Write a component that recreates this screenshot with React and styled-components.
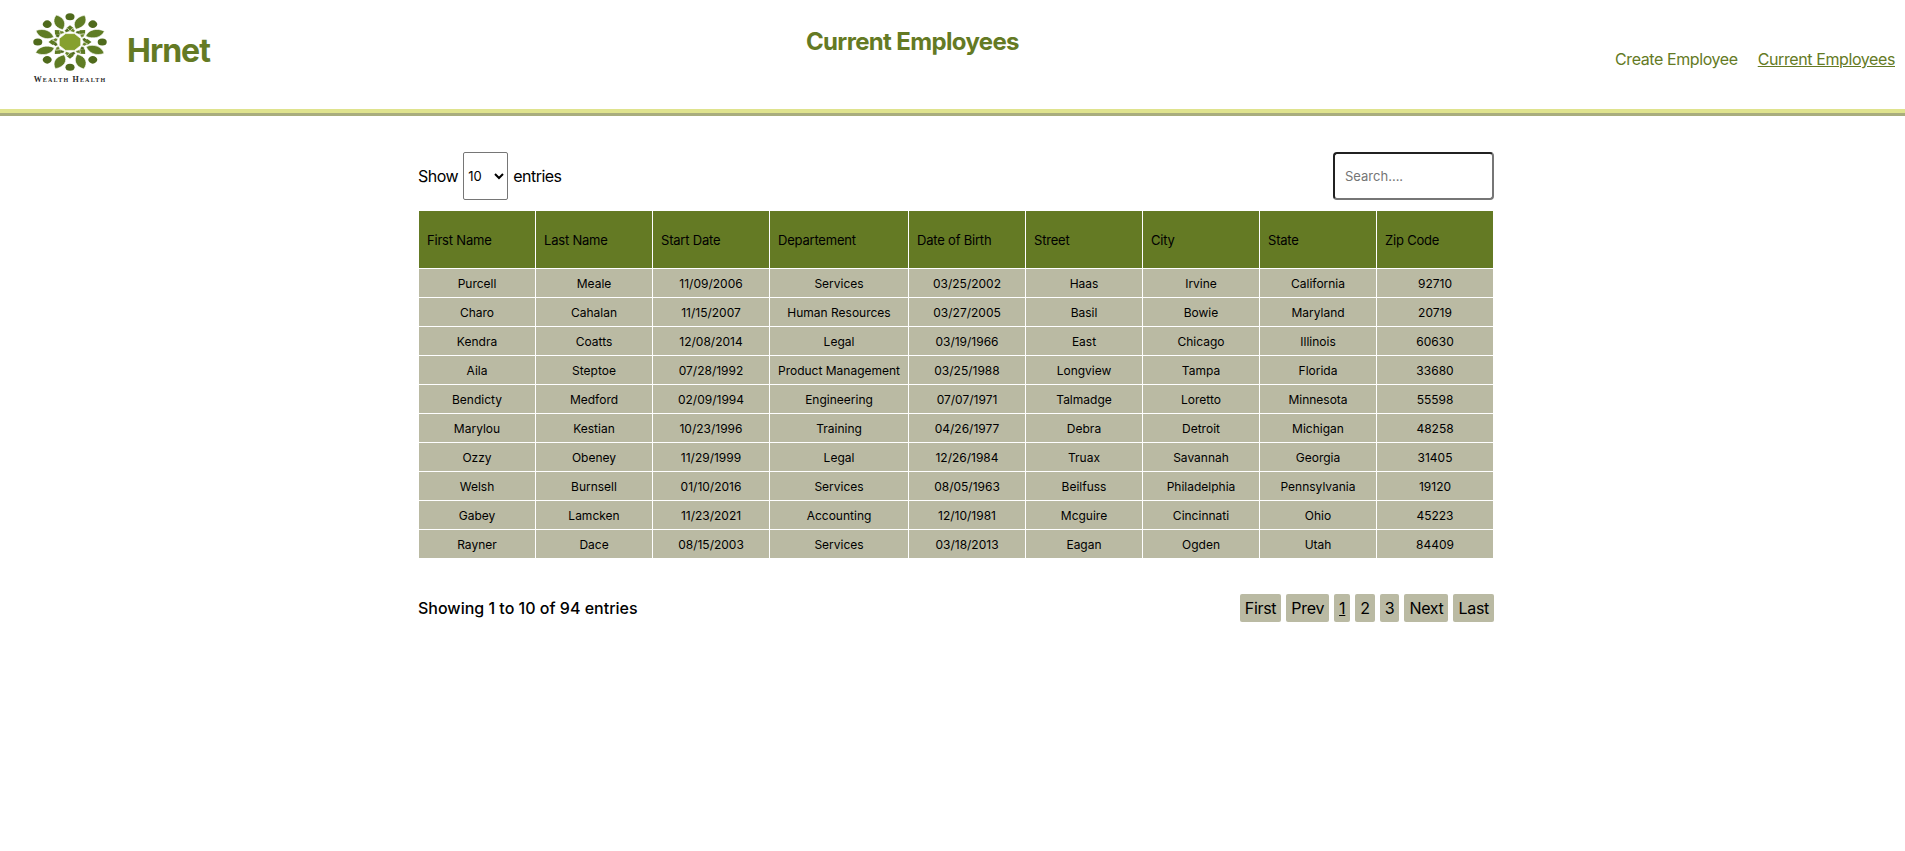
import styled, { createGlobalStyle } from 'styled-components'

const employees = [
	['Purcell', 'Meale', '11/09/2006', 'Services', '03/25/2002', 'Haas', 'Irvine', 'California', '92710'],
	['Charo', 'Cahalan', '11/15/2007', 'Human Resources', '03/27/2005', 'Basil', 'Bowie', 'Maryland', '20719'],
	['Kendra', 'Coatts', '12/08/2014', 'Legal', '03/19/1966', 'East', 'Chicago', 'Illinois', '60630'],
	['Aila', 'Steptoe', '07/28/1992', 'Product Management', '03/25/1988', 'Longview', 'Tampa', 'Florida', '33680'],
	['Bendicty', 'Medford', '02/09/1994', 'Engineering', '07/07/1971', 'Talmadge', 'Loretto', 'Minnesota', '55598'],
	['Marylou', 'Kestian', '10/23/1996', 'Training', '04/26/1977', 'Debra', 'Detroit', 'Michigan', '48258'],
	['Ozzy', 'Obeney', '11/29/1999', 'Legal', '12/26/1984', 'Truax', 'Savannah', 'Georgia', '31405'],
	['Welsh', 'Burnsell', '01/10/2016', 'Services', '08/05/1963', 'Beilfuss', 'Philadelphia', 'Pennsylvania', '19120'],
	['Gabey', 'Lamcken', '11/23/2021', 'Accounting', '12/10/1981', 'Mcguire', 'Cincinnati', 'Ohio', '45223'],
	['Rayner', 'Dace', '08/15/2003', 'Services', '03/18/2013', 'Eagan', 'Ogden', 'Utah', '84409'],
]

const columns = ['First Name', 'Last Name', 'Start Date', 'Departement', 'Date of Birth', 'Street', 'City', 'State', 'Zip Code']
const pages = ['First', 'Prev', '1', '2', '3', 'Next', 'Last']
const angles = [0, 45, 90, 135, 180, 225, 270, 315]

const Logo = () => (
	<LogoSvg viewBox="-31 -31 62 62" preserveAspectRatio="none">
		{angles.map((a) => (
			<g key={a} transform={`rotate(${a})`}>
				<circle cx="0" cy="-27" r="3.8" fill="#4f6a1c" />
				<path d="M0 -11.5 L3.2 -14.6 L0 -18 L-3.2 -14.6 Z" fill="#5d7a22" />
				<g transform="rotate(22.5)" stroke="#fff" strokeWidth="0.5">
					<path d="M-0.6 -14.5 C-6.4 -19 -5.6 -27 0.4 -31 C5.8 -26 5 -19 -0.6 -14.5 Z" fill="#5f7c24" />
					<path d="M0.6 -10.6 L4.4 -10.6 L3.6 -14.6 L0.4 -13 Z" fill="#4f6a1c" />
					<path d="M-0.6 -10.6 L-4.4 -10.6 L-3.6 -14.6 L-0.8 -13 Z" fill="#6b8629" />
				</g>
			</g>
		))}
		<polygon points="-3.7,-9 3.7,-9 9,-3.7 9,3.7 3.7,9 -3.7,9 -9,3.7 -9,-3.7" fill="#86a02e" stroke="#fff" strokeWidth="0.6" />
	</LogoSvg>
)

const App = () => {
	return (
		<>
			<GlobalStyle />
			<Header>
				<Brand>
					<LogoBox>
						<Logo />
						<LogoText>Wealth Health</LogoText>
					</LogoBox>
					<BrandName>Hrnet</BrandName>
				</Brand>
				<PageTitle>Current Employees</PageTitle>
				<Nav>
					<NavLink href="#create">Create Employee</NavLink>
					<NavLink href="#current" $active>Current Employees</NavLink>
				</Nav>
			</Header>
			<Main>
				<Controls>
					<ShowLabel>
						Show
						<EntriesSelect defaultValue="10">
							<option value="10">10</option>
							<option value="25">25</option>
							<option value="50">50</option>
						</EntriesSelect>
						entries
					</ShowLabel>
					<SearchInput placeholder="Search...." />
				</Controls>
				<Table>
					<colgroup>
						{columns.map((c) => (
							<col key={c} style={{ width: c === 'Departement' ? 139 : 117 }} />
						))}
					</colgroup>
					<thead>
						<tr>
							{columns.map((c) => (
								<HeadCell key={c}>{c}</HeadCell>
							))}
						</tr>
					</thead>
					<tbody>
						{employees.map((row) => (
							<tr key={row[0]}>
								{row.map((value, i) => (
									<Cell key={i}>{value}</Cell>
								))}
							</tr>
						))}
					</tbody>
				</Table>
				<Footer>
					<Summary>Showing 1 to 10 of 94 entries</Summary>
					<Pagination>
						{pages.map((p) => (
							<PageButton key={p} $current={p === '1'}>{p}</PageButton>
						))}
					</Pagination>
				</Footer>
			</Main>
		</>
	)
}

const GlobalStyle = createGlobalStyle`
	body {
		margin: 0;
		background: #fff;
		color: #000;
		font-family: Inter, "Liberation Sans", sans-serif;
	}
`

const Header = styled.header`
	display: flex;
	justify-content: space-between;
	height: 109px;
	padding-right: 10px;
	border-bottom: 4px solid #dfe38e;
	box-shadow: 0 3px 0 #a9ad7e;
`

const Brand = styled.div`
	display: flex;
	align-items: flex-start;
	padding-left: 30px;
	gap: 17px;
`

const LogoBox = styled.div`
	display: flex;
	flex-direction: column;
	align-items: center;
	width: 80px;
	padding-top: 13px;
`

const LogoSvg = styled.svg`
	display: block;
	width: 74px;
	height: 58px;
`

const LogoText = styled.span`
	font-family: "Liberation Serif", serif;
	font-size: 8px;
	font-weight: 700;
	font-variant: small-caps;
	letter-spacing: 1.2px;
	line-height: 8px;
	white-space: nowrap;
	color: #2b2b2b;
	margin-top: 5px;
`

const BrandName = styled.h1`
	margin: 31px 0 0;
	font-size: 32px;
	line-height: 39px;
	font-weight: 700;
	letter-spacing: -1px;
	color: #647a24;
`

const PageTitle = styled.h2`
	margin: 27px 0 0;
	font-size: 24px;
	line-height: 29px;
	font-weight: 700;
	letter-spacing: -0.65px;
	color: #647a24;
`

const Nav = styled.nav`
	display: flex;
	gap: 20px;
	padding-top: 50px;
`

const NavLink = styled.a`
	font-size: 16px;
	line-height: 19px;
	letter-spacing: -0.4px;
	color: #647a24;
	text-decoration: ${(p) => (p.$active ? 'underline' : 'none')};
`

const Main = styled.main`
	width: 1076px;
	margin: 39px auto 0 418px;
`

const Controls = styled.div`
	display: flex;
	justify-content: space-between;
	align-items: center;
	height: 48px;
`

const ShowLabel = styled.label`
	display: flex;
	align-items: center;
	gap: 5px;
	font-size: 16px;
	letter-spacing: -0.5px;
`

const EntriesSelect = styled.select`
	width: 45px;
	height: 48px;
	font-family: Inter, sans-serif;
	font-size: 13px;
	background: #fff;
	border: 1px solid #767676;
	border-radius: 2px;
`

const SearchInput = styled.input`
	box-sizing: border-box;
	width: 161px;
	height: 48px;
	padding: 0 10px;
	font-family: Inter, sans-serif;
	font-size: 13px;
	border: 2px inset #767676;
	border-radius: 4px;
	outline: none;

	&::placeholder {
		color: #757575;
	}
`

const Table = styled.table`
	width: 1075px;
	margin-top: 10px;
	table-layout: fixed;
	border-collapse: collapse;
	font-size: 12px;
`

const HeadCell = styled.th`
	height: 57px;
	padding: 0 8px;
	text-align: left;
	font-weight: 400;
	font-size: 13px;
	letter-spacing: -0.2px;
	background: #647a24;
	border: 1px solid #fff;
`

const Cell = styled.td`
	height: 28px;
	padding: 0;
	text-align: center;
	background: #babaa3;
	border: 1px solid #fff;
`

const Footer = styled.div`
	display: flex;
	justify-content: space-between;
	align-items: center;
	margin-top: 35px;
`

const Summary = styled.p`
	margin: 0;
	font-size: 16px;
	font-weight: 500;
`

const Pagination = styled.div`
	display: flex;
	gap: 5px;
`

const PageButton = styled.span`
	padding: 5px;
	font-size: 16px;
	line-height: 18px;
	letter-spacing: -0.3px;
	background: #babaa3;
	border-radius: 2px;
	text-decoration: ${(p) => (p.$current ? 'underline' : 'none')};
`

export default App
